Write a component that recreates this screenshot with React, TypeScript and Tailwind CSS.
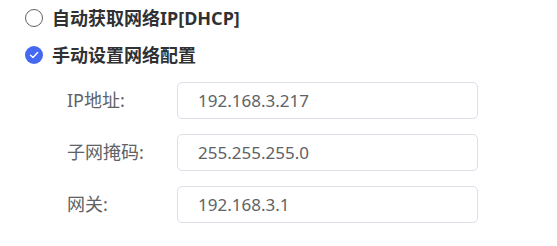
import React from 'react';

const fields = [
  { label: 'IP地址:', value: '192.168.3.217' },
  { label: '子网掩码:', value: '255.255.255.0' },
  { label: '网关:', value: '192.168.3.1' },
];

export default function App() {
  return (
    <div className="w-[557px] h-[246px] bg-white pl-[25px] pt-[8px] font-['Noto_Sans','Noto_Sans_CJK_SC',sans-serif]">
      {/* DHCP 选项 */}
      <div className="flex items-center h-[20px] gap-[9px]">
        <span className="w-[18px] h-[18px] rounded-full border border-[#606266] bg-white shrink-0" />
        <span className="text-[18px] font-bold text-[#303133] leading-none">自动获取网络IP[DHCP]</span>
      </div>

      {/* 手动设置 */}
      <div className="flex items-center h-[20px] gap-[9px] mt-[17px]">
        <span className="w-[18px] h-[18px] rounded-full bg-[#4468f2] shrink-0 flex items-center justify-center">
          <svg width="10" height="10" viewBox="0 0 10 10" fill="none">
            <path d="M1.5 5.2 L4 7.5 L8.6 2.6" stroke="white" strokeWidth="1.4" strokeLinecap="round" strokeLinejoin="round" />
          </svg>
        </span>
        <span className="text-[18px] font-bold text-[#303133] leading-none">手动设置网络配置</span>
      </div>

      <div className="pl-[42px] mt-[17px] flex flex-col gap-[15px]">
        {fields.map((f) => (
          <div key={f.label} className="flex items-center h-[37px]">
            <span className="w-[110px] text-[18px] text-[#606266]">{f.label}</span>
            <div className="w-[301px] h-[37px] border border-[#dcdfe6] rounded-[5px] flex items-center pl-[20px] text-[17px] text-[#606266]">
              {f.value}
            </div>
          </div>
        ))}
      </div>
    </div>
  );
}
